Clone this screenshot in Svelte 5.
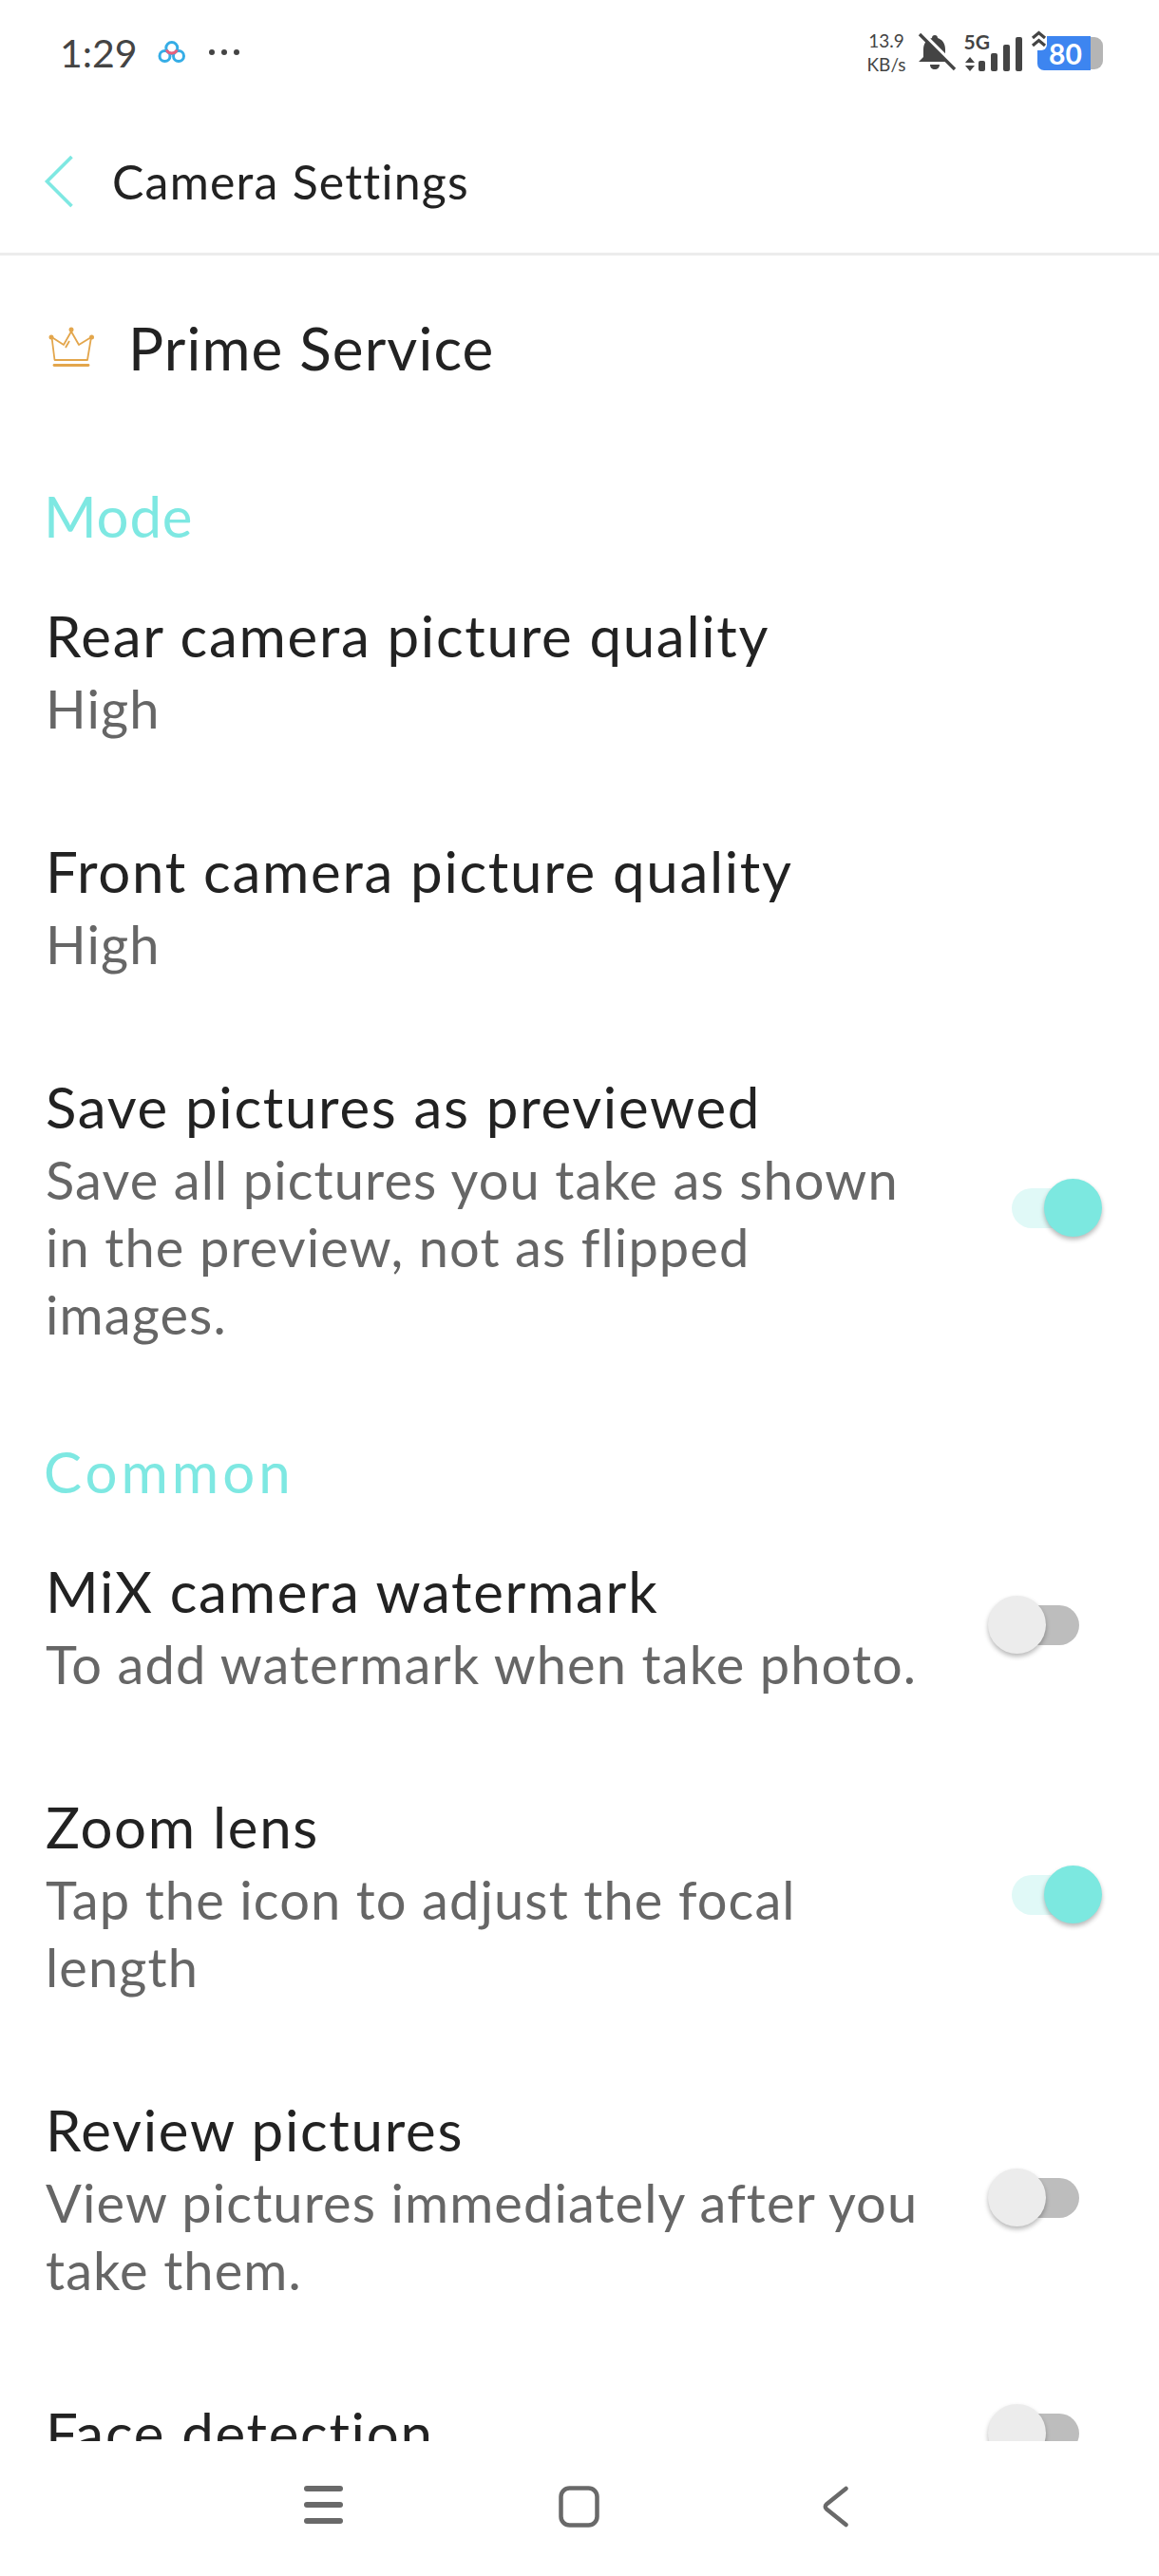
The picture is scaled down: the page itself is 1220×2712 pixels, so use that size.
<script>
  const modeRows = [
    { title: 'Rear camera picture quality', sub: ['High'] },
    { title: 'Front camera picture quality', sub: ['High'] },
    {
      title: 'Save pictures as previewed',
      sub: ['Save all pictures you take as shown', 'in the preview, not as flipped', 'images.'],
      toggle: 'on'
    }
  ]
  const commonRows = [
    { title: 'MiX camera watermark', sub: ['To add watermark when take photo.'], toggle: 'off' },
    { title: 'Zoom lens', sub: ['Tap the icon to adjust the focal', 'length'], toggle: 'on' },
    { title: 'Review pictures', sub: ['View pictures immediately after you', 'take them.'], toggle: 'off' },
    { title: 'Face detection', sub: [], toggle: 'off' }
  ]
</script>

{#snippet row(item)}
  <div class="row">
    <div class="texts">
      <div class="title">{item.title}</div>
      {#each item.sub as line}
        <div class="sub">{line}</div>
      {/each}
    </div>
    {#if item.toggle}
      <div class="switch {item.toggle}">
        <span class="track"></span>
        <span class="knob"></span>
      </div>
    {/if}
  </div>
{/snippet}

<div class="phone">
  <div class="status">
    <span class="time">1:29</span>
    <svg class="applogo" width="30" height="26" viewBox="0 0 30 26" fill="none">
      <circle cx="7.500" cy="17" r="5.500" stroke="#35ade6" stroke-width="3" />
      <circle cx="22" cy="17" r="5.500" stroke="#35ade6" stroke-width="3" />
      <circle cx="14.800" cy="8.500" r="6" stroke="#35ade6" stroke-width="3" />
      <path d="M9.300 10.500a6 6 0 0 0 11 0" stroke="#e8607c" stroke-width="3" />
    </svg>
    <svg class="more" width="34" height="8" viewBox="0 0 34 8" fill="#444">
      <circle cx="4" cy="4" r="3" /><circle cx="17" cy="4" r="3" /><circle cx="30" cy="4" r="3" />
    </svg>
    <div class="spacer"></div>
    <div class="speed"><span>13.9</span><span>KB/s</span></div>
    <svg class="bell" width="42" height="42" viewBox="0 0 42 42">
      <path d="M18 3c1.800 0 3 1.200 3 3 5 1.500 8 6 8 12v8l5 5H1l5-5v-8c0-6 3-10.500 9-12 0-1.800 1.200-3 3-3zM13 34h10c0 3-2 5-5 5s-5-2-5-5z" fill="#444" />
      <path d="M4 0l38 38" stroke="#fff" stroke-width="4" />
      <path d="M2 2l37 37" stroke="#444" stroke-width="3.400" />
    </svg>
    <div class="net">
      <div class="netleft">
        <span class="fiveg">5G</span>
        <svg width="10" height="15" viewBox="0 0 10 15" fill="#444"><path d="M5 0l5 6H0zM5 15L0 9h10z" /></svg>
      </div>
      <div class="bars">
        <span style="height: 11px"></span>
        <span style="height: 19px"></span>
        <span style="height: 28px"></span>
        <span style="height: 36px"></span>
      </div>
    </div>
    <div class="battery">
      <div class="cell">80</div>
      <div class="cap"></div>
      <svg class="charge" width="17" height="21" viewBox="0 0 17 21" fill="none" stroke="#444" stroke-width="3.200">
        <path d="M2 8l6.500-5.500L15 8M2 16l6.500-5.500L15 16" />
      </svg>
    </div>
  </div>

  <div class="header">
    <svg width="32" height="56" viewBox="0 0 32 56" fill="none">
      <path d="M29.500 2L3.500 28l26 26" stroke="#7ee8e2" stroke-width="3.600" />
    </svg>
    <span>Camera Settings</span>
  </div>

  <div class="list">
    <div class="prime">
      <svg width="48" height="44" viewBox="0 0 48 44" fill="none" stroke="#e3a64c" stroke-width="1.800">
        <path d="M3.500 11L6.500 35H41L45 11L32 19L24 5L16 19Z" stroke-linejoin="round" />
        <path d="M18 22l4-7" />
        <path d="M6 40.500h36" stroke-width="2.800" stroke-linecap="round" />
        <circle cx="3" cy="11" r="2.500" fill="#e3a64c" stroke="none" />
        <circle cx="24" cy="3" r="2.500" fill="#e3a64c" stroke="none" />
        <circle cx="45.500" cy="11" r="2.500" fill="#e3a64c" stroke="none" />
      </svg>
      <span>Prime Service</span>
    </div>

    <div class="section first">Mode</div>
    {#each modeRows as item}
      {@render row(item)}
    {/each}

    <div class="section common">Common</div>
    {#each commonRows as item}
      {@render row(item)}
    {/each}
  </div>

  <div class="nav">
    <svg width="41" height="40" viewBox="0 0 41 40" fill="#696969">
      <rect x="0" y="0" width="41" height="6" rx="3" />
      <rect x="0" y="17" width="41" height="6" rx="3" />
      <rect x="0" y="34" width="41" height="6" rx="3" />
    </svg>
    <svg width="43" height="44" viewBox="0 0 43 44" fill="none">
      <rect x="2.500" y="2.500" width="38" height="39" rx="9" stroke="#696969" stroke-width="4.500" />
    </svg>
    <svg width="27" height="44" viewBox="0 0 27 44" fill="none">
      <path d="M24.500 3L4 19.500a3.200 3.200 0 0 0 0 5L24.500 41" stroke="#696969" stroke-width="4.500" stroke-linecap="round" />
    </svg>
  </div>
</div>

<style>
  :global(body) {
    margin: 0;
    background: #fff;
  }

  .phone {
    width: 1220px;
    height: 2712px;
    display: flex;
    flex-direction: column;
    overflow: hidden;
    background: #fff;
    font-family: Lato, "Noto Sans", sans-serif;
    color: #222;
  }

  .status {
    height: 110px;
    flex: none;
    display: flex;
    align-items: center;
    padding: 0 59px 0 63px;
    color: #444;
    box-sizing: border-box;
  }

  .time {
    font-size: 41px;
    line-height: 1;
    margin-right: 21px;
  }

  .applogo {
    margin-right: 23px;
  }

  .spacer {
    flex: 1;
  }

  .speed {
    display: flex;
    flex-direction: column;
    align-items: center;
    font-size: 19px;
    line-height: 25px;
    margin-right: 12px;
  }

  .bell {
    margin-right: 8px;
  }

  .net {
    display: flex;
    align-items: flex-end;
    height: 40px;
    gap: 4px;
    margin-right: 16px;
  }

  .netleft {
    width: 10px;
    display: flex;
    flex-direction: column;
    align-items: flex-start;
    justify-content: space-between;
    height: 100%;
  }

  .fiveg {
    font-size: 21px;
    font-weight: 700;
    line-height: 18px;
    white-space: nowrap;
    margin-left: -1px;
  }

  .bars {
    display: flex;
    align-items: flex-end;
    gap: 5.500px;
  }

  .bars span {
    width: 7.500px;
    background: #444;
    border-radius: 2px;
  }

  .battery {
    position: relative;
    display: flex;
    align-items: center;
    margin-top: 2px;
  }

  .cell {
    width: 56px;
    height: 36px;
    background: #3d85f0;
    border-radius: 7px 0 0 7px;
    color: #fff;
    font-size: 30px;
    font-weight: 700;
    line-height: 36px;
    text-align: center;
    padding-left: 3px;
    box-sizing: border-box;
  }

  .cap {
    width: 13px;
    height: 34px;
    background: #b5b5b5;
    border-radius: 0 9px 9px 0;
  }

  .charge {
    position: absolute;
    left: -7px;
    top: -6px;
    background: #fff;
    border-radius: 0 0 6px 0;
  }

  .header {
    height: 159px;
    flex: none;
    box-sizing: border-box;
    display: flex;
    align-items: center;
    gap: 40px;
    padding: 6px 0 0 46px;
    border-bottom: 3px solid #ececec;
    font-size: 50px;
    letter-spacing: 1.200px;
  }

  .list {
    flex: none;
    height: 2301px;
    overflow: hidden;
  }

  .prime {
    display: flex;
    align-items: center;
    gap: 36px;
    height: 80px;
    margin-top: 57px;
    padding-left: 51px;
    font-size: 62px;
    letter-spacing: 1.100px;
  }

  .section {
    height: 80px;
    line-height: 80px;
    margin: 40px 0 0 46px;
    font-size: 60px;
    color: #7ee8e2;
  }

  .section.first {
    margin-top: 97px;
    letter-spacing: 0.800px;
  }

  .section.common {
    letter-spacing: 4px;
  }

  .row {
    display: flex;
    align-items: center;
    justify-content: space-between;
    padding: 45px 60px 50px 48px;
  }

  .title {
    font-size: 60px;
    line-height: 82px;
    letter-spacing: 1.700px;
    color: #222;
  }

  .sub {
    font-size: 56px;
    line-height: 71px;
    letter-spacing: 1.100px;
    color: #666;
  }

  .switch {
    position: relative;
    width: 120px;
    height: 61px;
    flex: none;
  }

  .track {
    position: absolute;
    top: 10px;
    height: 42px;
    width: 90px;
    border-radius: 21px;
  }

  .knob {
    position: absolute;
    top: 0;
    width: 61px;
    height: 61px;
    border-radius: 50%;
    box-shadow: 0 3px 5px rgba(0, 0, 0, 0.28);
  }

  .on .track {
    left: 25px;
    background: #e0f9f7;
  }

  .on .knob {
    right: 0;
    background: #7ce8e0;
  }

  .off .track {
    left: 6px;
    background: #bdbdbd;
  }

  .off .knob {
    left: 0;
    background: #ececec;
  }

  .nav {
    flex: 1;
    display: grid;
    grid-template-columns: 268px 278px 27px;
    justify-content: start;
    padding: 47px 0 0 320px;
    background: #fff;
    box-sizing: border-box;
  }
</style>
